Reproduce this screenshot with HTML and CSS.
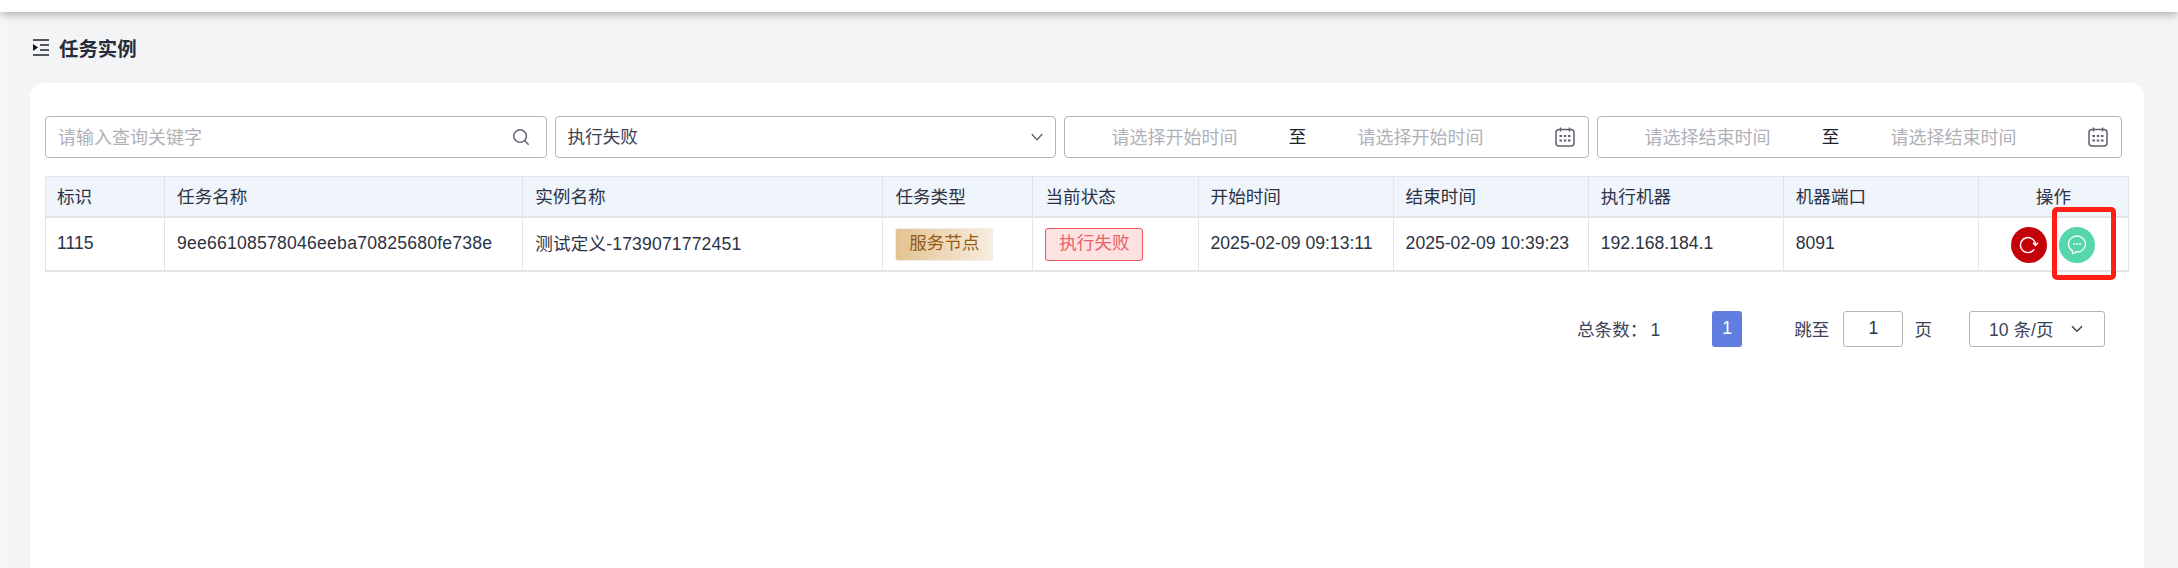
FILE: index.html
```html
<!DOCTYPE html>
<html lang="zh-CN">
<head>
    <meta charset="UTF-8">
    <title>任务实例</title>
    <link rel="stylesheet" href="styles.css">
</head>
<body>
    <div class="topbar"></div>
    <div class="title-row">
        <svg class="title-icon" width="16" height="17" viewBox="0 0 16 17">
            <path d="M0 1h16M7 6h9M7 11h9M0 16h16" stroke="#1f2329" stroke-width="1.6" fill="none"/>
            <path d="M0 5l5 3.500-5 3.500z" fill="#111"/>
        </svg>
        <h2 class="title">任务实例</h2>
    </div>

    <div class="card">
        <!-- filters -->
        <div class="filters">
            <div class="field field-short">
                <span class="placeholder">请输入查询关键字</span>
                <svg class="search-icon" width="18" height="18" viewBox="0 0 20 20">
                    <circle cx="9" cy="9" r="7" stroke="#5c6270" stroke-width="1.600" fill="none"/>
                    <path d="M14 14l4.500 4.500" stroke="#5c6270" stroke-width="1.600" fill="none"/>
                </svg>
            </div>
            <div class="field field-short">
                <span>执行失败</span>
                <svg class="chevron-icon" width="12" height="8" viewBox="0 0 12 8">
                    <path d="M0.700 1l5.300 5.800 5.300-5.800" stroke="#5c6270" stroke-width="1.300" fill="none"/>
                </svg>
            </div>
            <div class="field field-range">
                <span class="range-text placeholder">请选择开始时间</span>
                <span class="range-sep">至</span>
                <span class="range-text placeholder">请选择开始时间</span>
                <svg class="range-icon" width="20" height="20" viewBox="0 0 20 20">
                    <rect x="1" y="2.500" width="18" height="16.500" rx="3" stroke="#5c6270" stroke-width="1.500" fill="none"/>
                    <path d="M5.500 0.500v4M14.500 0.500v4" stroke="#5c6270" stroke-width="1.500"/>
                    <path d="M4.500 9h2.500M8.800 9h2.500M13 9h2.500M4.500 13.500h2.500M8.800 13.500h2.500M13 13.500h2.500" stroke="#5c6270" stroke-width="2"/>
                </svg>
            </div>
            <div class="field field-range">
                <span class="range-text placeholder">请选择结束时间</span>
                <span class="range-sep">至</span>
                <span class="range-text placeholder">请选择结束时间</span>
                <svg class="range-icon" width="20" height="20" viewBox="0 0 20 20">
                    <rect x="1" y="2.500" width="18" height="16.500" rx="3" stroke="#5c6270" stroke-width="1.500" fill="none"/>
                    <path d="M5.500 0.500v4M14.500 0.500v4" stroke="#5c6270" stroke-width="1.500"/>
                    <path d="M4.500 9h2.500M8.800 9h2.500M13 9h2.500M4.500 13.500h2.500M8.800 13.500h2.500M13 13.500h2.500" stroke="#5c6270" stroke-width="2"/>
                </svg>
            </div>
        </div>

        <table class="task-table">
            <colgroup>
                <col class="col-id">
                <col class="col-hash">
                <col class="col-inst">
                <col class="col-type">
                <col class="col-state">
                <col class="col-time">
                <col class="col-time">
                <col class="col-time">
                <col class="col-time">
                <col class="col-type">
            </colgroup>
            <thead>
                <tr>
                    <th class="first">标识</th>
                    <th>任务名称</th>
                    <th>实例名称</th>
                    <th>任务类型</th>
                    <th>当前状态</th>
                    <th>开始时间</th>
                    <th>结束时间</th>
                    <th>执行机器</th>
                    <th>机器端口</th>
                    <th class="center">操作</th>
                </tr>
            </thead>
            <tbody>
                <tr>
                    <td class="first">1115</td>
                    <td class="hash">9ee66108578046eeba70825680fe738e</td>
                    <td class="inst">测试定义-1739071772451</td>
                    <td><span class="tag tag-node">服务节点</span></td>
                    <td><span class="tag tag-fail">执行失败</span></td>
                    <td>2025-02-09 09:13:11</td>
                    <td>2025-02-09 10:39:23</td>
                    <td>192.168.184.1</td>
                    <td>8091</td>
                    <td>
                        <div class="actions">
                            <span class="round-btn btn-red">
                                <svg width="20" height="20" viewBox="0 0 20 20">
                                    <path d="M15.200 14.300A7.500 7.500 0 1 1 16.500 10" stroke="#fff" stroke-width="1.400" fill="none"/>
                                    <path d="M14 7.800l2.500 2.700 2.500-2.700" stroke="#fff" stroke-width="1.400" fill="none"/>
                                </svg>
                            </span>
                            <span class="round-btn btn-green">
                                <svg width="20" height="20" viewBox="0 0 20 20">
                                    <path d="M10 1C5.300 1 1.500 4.600 1.500 9c0 2.900 1.500 5.200 3.700 6.400L5.600 18.500l3.600-1.500h.8c4.700 0 8.500-3.600 8.500-8S14.700 1 10 1z" stroke="#fff" stroke-width="1.300" fill="none"/>
                                    <circle cx="7" cy="9" r="1" fill="#fff"/>
                                    <circle cx="10" cy="9" r="1" fill="#fff"/>
                                    <circle cx="13" cy="9" r="1" fill="#fff"/>
                                </svg>
                                <span class="mark-box"></span>
                            </span>
                        </div>
                    </td>
                </tr>
            </tbody>
        </table>

        <div class="pager">
            <span class="total">总条数：<span class="total-num">1</span></span>
            <span class="page-btn">1</span>
            <span class="jump-label">跳至</span>
            <span class="jump-input">1</span>
            <span class="jump-label">页</span>
            <span class="size-select">
                <span class="size-text">10 条/页</span>
                <svg width="12" height="8" viewBox="0 0 12 8">
                    <path d="M1 1.200l5 5 5-5" stroke="#3c4358" stroke-width="1.500" fill="none"/>
                </svg>
            </span>
        </div>
    </div>
</body>
</html>
```

FILE: styles.css
```css
html, body {
    margin: 0;
    padding: 0;
    height: 100%;
}

body {
    display: flex;
    flex-direction: column;
    overflow: hidden;
    background: linear-gradient(to right, #f8f8fa, #f3f4f6 14px);
    color: #2c3345;
    font-family: "Liberation Sans", "Noto Sans CJK SC", sans-serif;
    font-size: 17.6px;
}

.topbar {
    flex: none;
    height: 12px;
    background-color: #fff;
    box-shadow: 0 2px 10px rgba(0, 0, 0, 0.32);
}

.title-row {
    flex: none;
    display: flex;
    align-items: center;
    height: 71px;
    padding-left: 33px;
    box-sizing: border-box;
    padding-bottom: 1px;
}

.title-icon {
    margin-right: 10px;
}

.title {
    margin: 0;
    font-size: 19.4px;
    font-weight: bold;
    color: #262c3a;
}

.card {
    flex: 1;
    margin: 0 34px 0 30px;
    padding: 33px 15px 0;
    background-color: #fff;
    border-radius: 14px 14px 0 0;
}

.filters {
    display: flex;
    gap: 8px;
    margin-right: 7px;
}

.field {
    display: flex;
    align-items: center;
    box-sizing: border-box;
    height: 42px;
    padding: 0 12px;
    border: 1px solid #b2b4c2;
    border-radius: 4px;
    color: #3c4358;
}

.field > span {
    margin-bottom: 3px;
}

.field-short {
    width: 501.5px;
}

.field-range {
    width: 525px;
}

.search-icon {
    margin-left: auto;
    margin-right: 4px;
}

.chevron-icon {
    margin-left: auto;
}

.range-icon {
    margin-left: auto;
    margin-right: 1px;
}

.placeholder {
    color: #b0b1b8;
    font-size: 18px;
}

.range-text {
    width: 195px;
    text-align: center;
}

.range-sep {
    width: 51px;
    text-align: center;
    color: #1d2129;
}

.task-table {
    width: 2084px;
    margin-top: 18px;
    border-collapse: collapse;
    table-layout: fixed;
}

.col-id { width: 119px; }
.col-hash { width: 358px; }
.col-inst { width: 360px; }
.col-type { width: 150px; }
.col-state { width: 165px; }
.col-time { width: 195px; }

.task-table th,
.task-table td {
    box-sizing: border-box;
    padding: 0 12px;
    border: 1px solid #e2e4ea;
    font-weight: normal;
    text-align: left;
    white-space: nowrap;
}

.task-table th {
    height: 40px;
    padding-bottom: 2px;
    background-color: #f0f4fb;
    border-bottom-width: 2px;
}

.task-table td {
    height: 54px;
    border-bottom-width: 2px;
}

.task-table .first {
    padding-left: 11px;
}

.task-table .center {
    text-align: center;
}

.hash {
    letter-spacing: 0.22px;
}

.task-table .inst {
    padding-bottom: 2px;
    letter-spacing: 0.15px;
}

.tag {
    display: inline-block;
    box-sizing: border-box;
    width: 98px;
    height: 33px;
    margin-top: 2px;
    line-height: 29px;
    text-align: center;
    border-radius: 3px;
    vertical-align: middle;
}

.tag-node {
    border: 1px solid #f1ece4;
    background: linear-gradient(to right, #e2c392, #f7eddf);
    color: #975a16;
}

.tag-fail {
    border: 1px solid #e8555a;
    background-color: #fde2e2;
    color: #e8636a;
}

.actions {
    display: flex;
    justify-content: center;
    gap: 12px;
    margin-top: 2px;
}

.round-btn {
    position: relative;
    display: flex;
    align-items: center;
    justify-content: center;
    width: 36px;
    height: 36px;
    border-radius: 50%;
}

.btn-red {
    background-color: #c4000b;
}

.btn-green {
    background-color: #55d6ab;
}

/* red annotation drawn over the screenshot */
.mark-box {
    position: absolute;
    top: -20px;
    left: -7px;
    width: 64px;
    height: 73px;
    box-sizing: border-box;
    border: 5px solid #ff1f14;
    border-radius: 5px;
}

.pager {
    display: flex;
    align-items: center;
    justify-content: flex-end;
    height: 36px;
    margin-top: 39px;
    padding-right: 24px;
    color: #3c4358;
}

.total {
    margin-right: 52px;
    margin-bottom: 1px;
}

.total-num {
    margin-left: 3px;
}

.jump-label {
    margin-bottom: 1px;
}

.page-btn {
    width: 30px;
    height: 36px;
    margin-right: 52px;
    line-height: 35px;
    text-align: center;
    border-radius: 3px;
    background-color: #5f7ee0;
    color: #fff;
}

.jump-input {
    box-sizing: border-box;
    width: 60px;
    height: 36px;
    margin: 0 11px 0 14px;
    line-height: 33px;
    text-align: center;
    border: 1px solid #b2b4c2;
    border-radius: 3px;
    color: #2c3345;
}

.size-select {
    display: flex;
    align-items: center;
    justify-content: space-between;
    box-sizing: border-box;
    width: 136px;
    height: 36px;
    margin-left: 37px;
    padding: 0 21px 0 19px;
    border: 1px solid #b2b4c2;
    border-radius: 3px;
}

.size-text {
    margin-bottom: 1px;
}
```
